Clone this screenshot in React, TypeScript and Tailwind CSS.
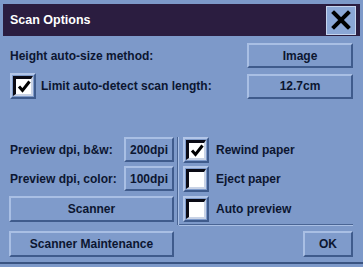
import React from "react";

const font = { fontFamily: '"Liberation Sans", Arial, sans-serif' };

function Btn({ children, className = "" }: { children: React.ReactNode; className?: string }) {
  return (
    <div
      className={
        "flex items-center justify-center bg-[#7f9bcb] border-t-2 border-l-2 border-b-2 border-r-2 border-t-[#a9bfe4] border-l-[#a9bfe4] border-b-[#3f5b8c] border-r-[#3f5b8c] text-[12px] font-bold text-[#0c1631] " +
        className
      }
    >
      {children}
    </div>
  );
}

function Check({ checked }: { checked?: boolean }) {
  return (
    <div className="w-[26px] h-[26px] shrink-0 border-2 border-t-[#b3c6e8] border-l-[#b3c6e8] border-b-[#3f5b8c] border-r-[#3f5b8c] bg-[#7f9bcb] p-[1px]">
      <div className="w-full h-full border-t-[3px] border-l-[3px] border-b-2 border-r-2 border-t-[#0a0a14] border-l-[#0a0a14] border-b-[#c9d3e6] border-r-[#c9d3e6] bg-white flex items-center justify-center">
        {checked && (
          <svg width="14" height="13" viewBox="0 0 14 13">
            <path d="M2 6.5 L5.5 10.5 L12.5 1.5" fill="none" stroke="#000" strokeWidth="3" strokeLinejoin="miter" />
          </svg>
        )}
      </div>
    </div>
  );
}

export default function App() {
  return (
    <div className="w-[363px] h-[267px] bg-[#7d99c9] relative overflow-hidden" style={font}>
      <div className="mx-[3px] pt-[4px]">
        <div className="h-[32px] bg-[#2b1d40] flex items-center justify-between pl-[7px] pr-[4px]">
          <span className="text-white font-bold text-[12.5px]">Scan Options</span>
          <div className="w-[30px] h-[29px] bg-[#8ba7d6] border border-[#c5d4ee] flex items-center justify-center">
            <svg width="20" height="20" viewBox="0 0 20 20">
              <path d="M3 3 L17 17 M17 3 L3 17" stroke="#000" strokeWidth="4" strokeLinecap="square" />
            </svg>
          </div>
        </div>
      </div>
      <div className="pl-[9px] pr-[10px] text-[#0c1631] text-[12px] font-bold">
        <div className="mt-[7px] h-[25px] flex items-center justify-between">
          <span className="pl-[1px]">Height auto-size method:</span>
          <Btn className="w-[106px] h-[25px]">Image</Btn>
        </div>
        <div className="mt-[5px] h-[26px] flex items-center justify-between">
          <div className="flex items-center gap-[5px] pl-[1px]">
            <Check checked />
            <span>Limit auto-detect scan length:</span>
          </div>
          <Btn className="w-[106px] h-[25px]">12.7cm</Btn>
        </div>
        <div className="mt-[38px] flex">
          <div className="w-[165px] flex flex-col gap-[4px]">
            <div className="h-[25px] flex items-center justify-between">
              <span className="pl-[1px]">Preview dpi, b&amp;w:</span>
              <Btn className="w-[50px] h-[25px]">200dpi</Btn>
            </div>
            <div className="h-[25px] flex items-center justify-between">
              <span className="pl-[1px]">Preview dpi, color:</span>
              <Btn className="w-[50px] h-[25px]">100dpi</Btn>
            </div>
            <Btn className="w-[165px] h-[26px] mt-[1px]">Scanner</Btn>
          </div>
          <div className="ml-[3px] w-[2px] border-l border-l-[#4a6594] border-r border-r-[#a9bfe4] h-[88px]" />
          <div className="flex-1 flex flex-col">
            <div className="ml-[4px] flex flex-col gap-[4px]">
              <div className="h-[25px] flex items-center gap-[7px]">
                <Check checked />
                <span>Rewind paper</span>
              </div>
              <div className="h-[25px] flex items-center gap-[7px]">
                <Check />
                <span>Eject paper</span>
              </div>
              <div className="h-[26px] mt-[1px] flex items-center gap-[7px]">
                <Check />
                <span>Auto preview</span>
              </div>
            </div>
            <div className="mt-[2px] h-[2px] border-t border-t-[#4a6594] border-b border-b-[#a9bfe4]" />
          </div>
        </div>
        <div className="mt-[5px] flex justify-between">
          <Btn className="w-[165px] h-[26px]">Scanner Maintenance</Btn>
          <Btn className="w-[50px] h-[26px]">OK</Btn>
        </div>
      </div>
      <div className="absolute left-0 right-0 bottom-[3px] h-[2px] bg-[#3a5482]" />
    </div>
  );
}
